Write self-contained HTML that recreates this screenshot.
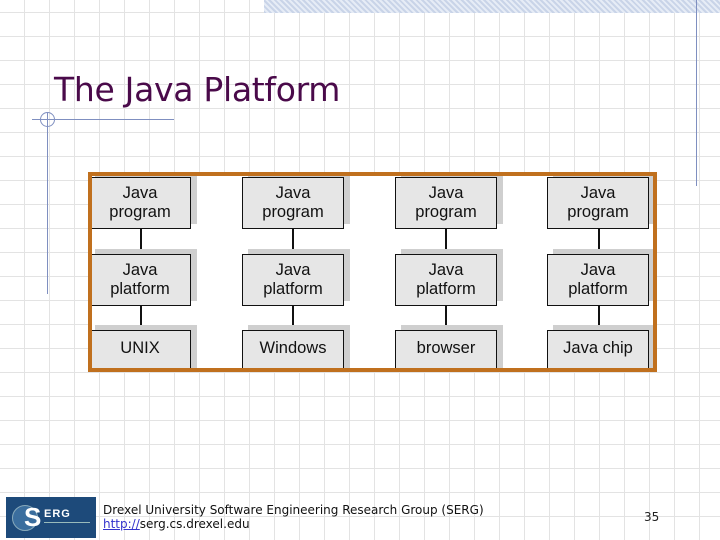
<!DOCTYPE html>
<html><head><style>
body{margin:0;width:720px;height:540px;position:relative;overflow:hidden;background-color:#fff;
background-image:repeating-linear-gradient(90deg,transparent 0 24px,#e3e3e3 24px 25px),repeating-linear-gradient(0deg,transparent 0 23px,#e3e3e3 23px 24px);
background-position:0 0,0 0;font-family:"Liberation Sans",sans-serif}
.a{position:absolute}
.box{position:absolute;width:102px;background:#e6e6e6;border:1.5px solid #111;box-sizing:border-box;text-align:center;font-size:16.5px;line-height:19px;color:#111;display:flex;align-items:center;justify-content:center;box-shadow:6px -5px 0 #cfcfcf}
.ln{position:absolute;width:2px;background:#111}
</style></head><body>
<div class="a" style="left:264px;top:0;width:456px;height:13px;background:#dbe3f0;background-image:repeating-linear-gradient(45deg,#c9d4e8 0 2px,#e6ecf6 2px 4px)"></div>
<div class="a" style="left:696px;top:0;width:1px;height:186px;background:#7f8fc0"></div>
<div class="a" style="left:47px;top:112px;width:1px;height:182px;background:#7f8fc0"></div>
<div class="a" style="left:32px;top:119px;width:142px;height:1px;background:#7f8fc0"></div>
<div class="a" style="left:40px;top:112px;width:13px;height:13px;border:1px solid #7f8fc0;border-radius:50%"></div>
<div class="a" style="left:54px;top:70px;font-family:'DejaVu Sans',sans-serif;font-size:33px;color:#4a0a4a;letter-spacing:-0.3px">The Java Platform</div>
<div class="a" style="left:88px;top:172px;width:569px;height:200px;border:4px solid #c0701e;box-sizing:border-box;background:#fff;overflow:hidden">
</div>
<div class="a" style="left:92px;top:176px;width:561px;height:192px;overflow:hidden">
<div class="ln" style="left:48px;top:50px;height:150px"></div>
<div class="ln" style="left:200px;top:50px;height:150px"></div>
<div class="ln" style="left:353px;top:50px;height:150px"></div>
<div class="ln" style="left:506px;top:50px;height:150px"></div>
<div class="box" style="left:-3px;top:1px;height:52px">Java<br>program</div>
<div class="box" style="left:150px;top:1px;height:52px">Java<br>program</div>
<div class="box" style="left:303px;top:1px;height:52px">Java<br>program</div>
<div class="box" style="left:455px;top:1px;height:52px">Java<br>program</div>
<div class="box" style="left:-3px;top:78px;height:52px">Java<br>platform</div>
<div class="box" style="left:150px;top:78px;height:52px">Java<br>platform</div>
<div class="box" style="left:303px;top:78px;height:52px">Java<br>platform</div>
<div class="box" style="left:455px;top:78px;height:52px">Java<br>platform</div>
<div class="box" style="left:-3px;top:154px;height:44px;padding-bottom:8px">UNIX</div>
<div class="box" style="left:150px;top:154px;height:44px;padding-bottom:8px">Windows</div>
<div class="box" style="left:303px;top:154px;height:44px;padding-bottom:8px">browser</div>
<div class="box" style="left:455px;top:154px;height:44px;padding-bottom:8px">Java chip</div>
</div>
<div class="a" style="left:6px;top:497px;width:90px;height:41px;background:#1d4a7a">
<div class="a" style="left:6px;top:8px;width:24px;height:24px;border-radius:50%;background:#3b6e9e;border:1px solid #8ab"></div>
<div class="a" style="left:18px;top:5px;font:bold 26px 'Liberation Sans';color:#fff">S</div>
<div class="a" style="left:38px;top:11px;font:bold 11px 'Liberation Sans';color:#fff;letter-spacing:1px">ERG</div>
<div class="a" style="left:38px;top:25px;width:46px;height:1px;background:#9bb"></div>
</div>
<div class="a" style="left:103px;top:503px;font-family:'DejaVu Sans',sans-serif;font-size:12px;line-height:14px;color:#111">Drexel University Software Engineering Research Group (SERG)<br><span style="text-decoration:underline;color:#33c">http://</span>serg.cs.drexel.edu</div>
<div class="a" style="left:644px;top:510px;font-family:'DejaVu Sans',sans-serif;font-size:12px;color:#222">35</div>
</body></html>
